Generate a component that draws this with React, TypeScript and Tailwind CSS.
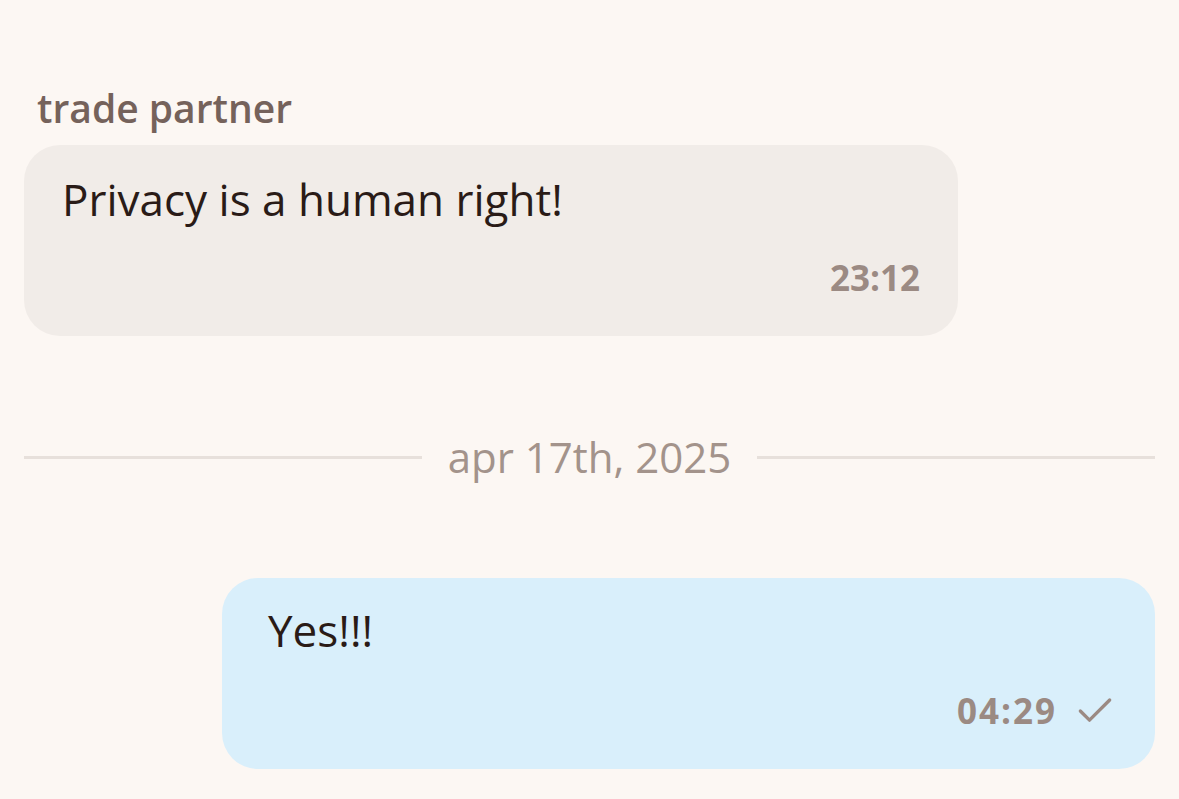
import { Check } from "lucide-react";

const font = { fontFamily: '"Open Sans", "Noto Sans", sans-serif' };

const App = () => {
  return (
    <div className="w-[1179px] h-[799px] overflow-hidden bg-[#fcf7f3] px-6 pt-[84px]" style={font}>
      <div className="pl-[13px] text-[39px] leading-[48px] font-semibold text-[#75625b]">trade partner</div>
      <div className="mt-[13px] w-[934px] h-[191px] rounded-[36px] bg-[#f1ece8] pl-[38px] pr-[38px] pt-[24px] flex flex-col">
        <p className="text-[44px] leading-[60px] text-[#2a1b17]">Privacy is a human right!</p>
        <div className="mt-auto mb-[38px] self-end text-[35px] leading-[40px] font-bold text-[#9b8a83]">23:12</div>
      </div>
      <div className="mt-[93px] flex items-center gap-[26px]">
        <div className="flex-1 h-[3px] bg-[#e7e0db]"></div>
        <div className="text-[42px] leading-[56px] text-[#a3938b]">apr 17th, 2025</div>
        <div className="flex-1 h-[3px] bg-[#e7e0db]"></div>
      </div>
      <div className="mt-[93px] ml-auto w-[933px] h-[191px] rounded-[36px] bg-[#d9effb] pl-[46px] pr-[38px] pt-[22px] flex flex-col">
        <p className="text-[44px] leading-[60px] text-[#2a1b17]">Yes!!!</p>
        <div className="mt-auto mb-[36px] self-end flex items-center gap-[16px]">
          <span className="text-[35px] leading-[40px] font-bold tracking-[2px] text-[#9b8a83]">04:29</span>
          <Check className="w-[44px] h-[44px] text-[#9b8a83]" strokeWidth={1.8} />
        </div>
      </div>
    </div>
  );
};

export default App;
